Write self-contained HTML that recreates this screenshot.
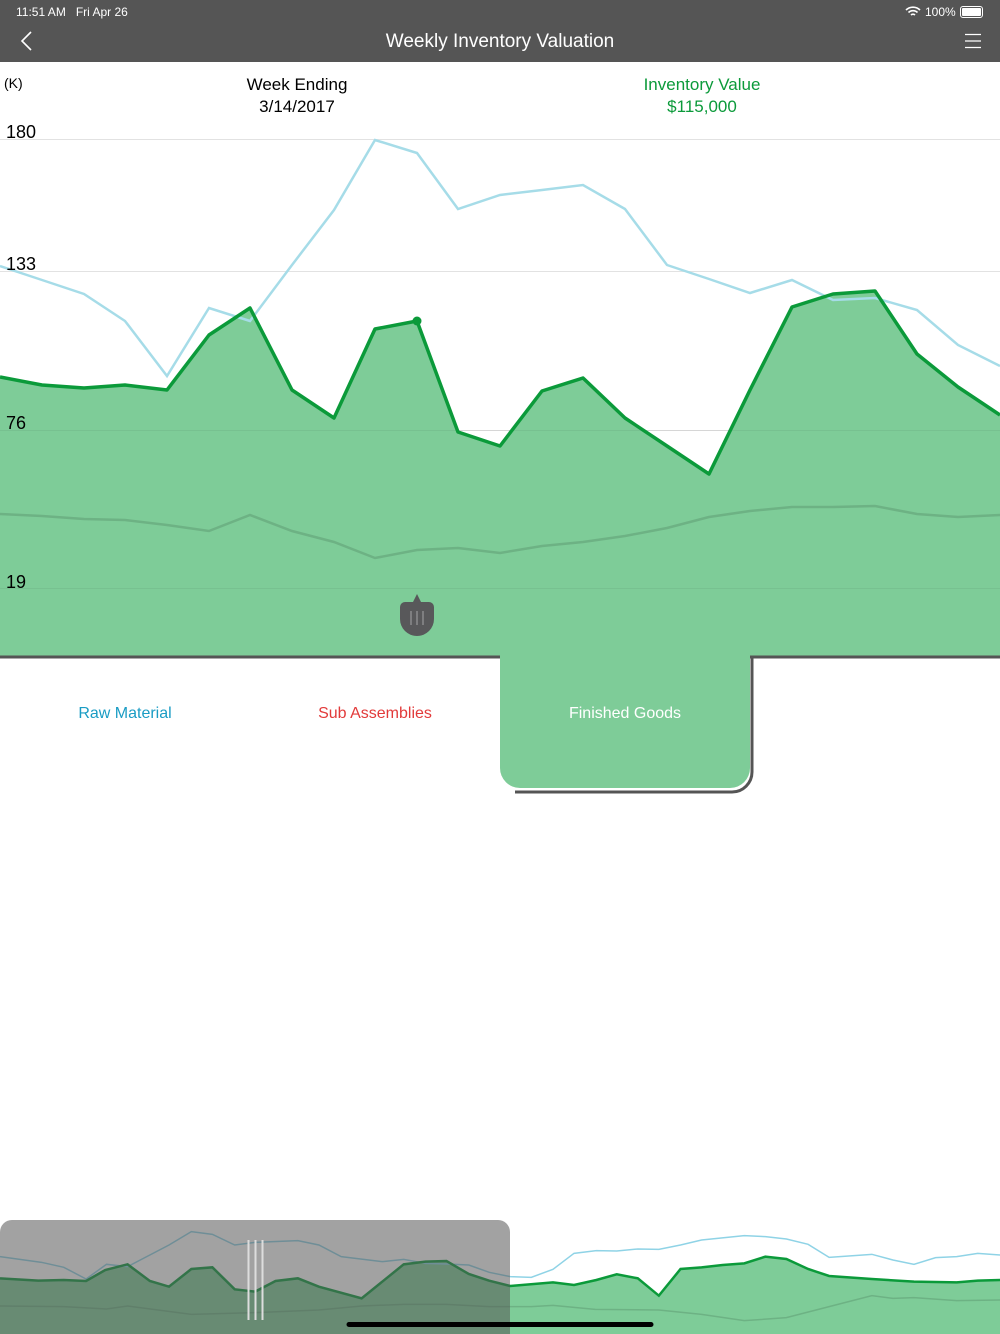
<!DOCTYPE html>
<html><head><style>
body{margin:0;width:1000px;height:1334px;position:relative;overflow:hidden;background:#fff;font-family:"Liberation Sans",sans-serif}
.a{position:absolute;white-space:nowrap}
</style></head><body>
<div class="a" style="left:0;top:0;width:1000px;height:62px;background:#555"></div>
<div class="a" style="left:16px;top:5px;font-size:12px;color:#fff">11:51 AM&nbsp;&nbsp;&nbsp;Fri Apr 26</div>
<div class="a" style="left:925px;top:5px;font-size:12px;color:#fff">100%</div>
<svg class="a" style="left:905px;top:5px" width="16" height="13" viewBox="0 0 16 13"><path d="M1 5a10 10 0 0 1 14 0M3.5 7.5a6.5 6.5 0 0 1 9 0M6 10a3 3 0 0 1 4 0" stroke="#fff" stroke-width="1.6" fill="none"/></svg>
<div class="a" style="left:960px;top:6px;width:21px;height:10px;border:1px solid #fff;border-radius:3px"><div style="margin:1px;height:8px;background:#fff;border-radius:1px"></div></div>
<svg class="a" style="left:18px;top:30px" width="16" height="22"><path d="M13 2L4 11l9 9" stroke="#fff" stroke-width="1.6" fill="none"/></svg>
<div class="a" style="left:0;width:1000px;top:31px;text-align:center;font-size:19px;color:#fff">Weekly Inventory Valuation</div>
<svg class="a" style="left:964px;top:33px" width="18" height="16"><path d="M1 1.5h16M1 8h16M1 14.5h16" stroke="#fff" stroke-width="1.3"/></svg>

<svg class="a" style="left:0;top:0" width="1000" height="1334">
<g stroke="#e2e2e2" stroke-width="1"><path d="M0 139.5H1000M0 271.5H1000M0 430.5H1000M0 588.5H1000"/></g>
<path d="M0 377L42 385L84 388L125 385L167 390L209 335L250 308L292 390L334 418L375 329L417 321L458 432L500 446L542 391L583 378L625 418L667 446L709 474L750 390L792 307L833 294L875 291L917 354L958 387L1000 415L1000 656L0 656Z" fill="#7ecc98"/>
<polyline points="0,266 42,280 84,294 125,321 167,376 209,308 250,321 292,265 334,210 375,140 417,153 458,209 500,195 542,190 583,185 625,209 667,265 709,279 750,293 792,280 833,300 875,298 917,310 958,345 1000,366" fill="none" stroke="#a6dce8" stroke-width="2.5"/>
<g stroke="#000" stroke-opacity="0.05" stroke-width="1"><path d="M0 430.5H1000M0 588.5H1000"/></g>
<polyline points="0,514 42,516 84,519 125,520 167,525 209,531 250,515 292,531 334,542 375,558 417,550 458,548 500,553 542,546 583,542 625,536 667,528 709,517 750,511 792,507 833,507 875,506 917,514 958,517 1000,515" fill="none" stroke="#6db284" stroke-width="2.5"/>
<polyline points="0,377 42,385 84,388 125,385 167,390 209,335 250,308 292,390 334,418 375,329 417,321 458,432 500,446 542,391 583,378 625,418 667,446 709,474 750,390 792,307 833,294 875,291 917,354 958,387 1000,415" fill="none" stroke="#0b9a3a" stroke-width="3.5" stroke-linejoin="round"/>
<circle cx="417" cy="321" r="4.5" fill="#0b9a3a"/>
<path d="M0 657H502M750 657H1000" stroke="#555" stroke-width="3"/>
<path d="M752 656V772a20 20 0 0 1 -20 20H515" fill="none" stroke="#555" stroke-width="3"/>
<path d="M500 655H750V768a20 20 0 0 1 -20 20H520a20 20 0 0 1 -20 -20Z" fill="#7ecc98"/>
<path d="M417 594L421 602H429a5 5 0 0 1 5 5V619a17 17 0 0 1 -34 0V607a5 5 0 0 1 5 -5H413Z" fill="#58585a"/>
<path d="M411 611V625M417 611V625M423 611V625" stroke="#8a8a8c" stroke-width="1.5"/>

<g transform="translate(0,1210) scale(0.6378,0.3333)">
<path d="M0 205L60 212L100 210L135 213L165 180L200 163L235 213L265 230L300 177L333 172L368 238L400 245L432 213L467 205L500 230L567 265L633 163L667 155L700 153L735 192L767 212L800 228L867 217L900 225L935 210L967 193L1000 205L1033 257L1067 177L1100 172L1133 165L1167 160L1200 140L1233 147L1267 177L1300 198L1367 207L1433 215L1500 217L1533 212L1568 210L1568 372L0 372Z" fill="#7ecc98"/>
<polyline points="0,140 65,157 100,172 135,207 167,163 200,170 265,105 300,65 333,73 368,105 400,97 467,92 500,105 535,140 600,155 633,148 667,160 700,162 735,165 767,187 800,200 833,202 867,178 900,130 935,122 967,123 1000,117 1033,118 1067,105 1100,90 1167,77 1200,80 1233,87 1267,103 1300,142 1367,133 1400,150 1433,163 1467,143 1500,140 1533,130 1568,135" fill="none" stroke="#8fd3e6" stroke-width="1.5" vector-effect="non-scaling-stroke"/>
<polyline points="0,288 100,290 167,297 200,288 300,313 400,308 500,300 567,288 633,283 700,283 767,290 833,290 867,286 933,298 1033,300 1100,313 1167,332 1233,323 1300,290 1367,257 1400,265 1433,263 1500,272 1568,270" fill="none" stroke="#6db284" stroke-width="1.5" vector-effect="non-scaling-stroke"/>
<polyline points="0,205 60,212 100,210 135,213 165,180 200,163 235,213 265,230 300,177 333,172 368,238 400,245 432,213 467,205 500,230 567,265 633,163 667,155 700,153 735,192 767,212 800,228 867,217 900,225 935,210 967,193 1000,205 1033,257 1067,177 1100,172 1133,165 1167,160 1200,140 1233,147 1267,177 1300,198 1367,207 1433,215 1500,217 1533,212 1568,210" fill="none" stroke="#0b9a3a" stroke-width="2.5" vector-effect="non-scaling-stroke"/>
</g>
<path d="M0 1334V1232a12 12 0 0 1 12 -12H498a12 12 0 0 1 12 12V1334Z" fill="#555" fill-opacity="0.55"/>
<path d="M248.5 1240V1320M255.5 1240V1320M262.5 1240V1320" stroke="#ddd" stroke-width="2"/>
<path d="M349 1324.5H651" stroke="#000" stroke-width="5" stroke-linecap="round"/>
</svg>

<div class="a" style="left:4px;top:75px;font-size:14px">(K)</div>
<div class="a" style="left:197px;width:200px;top:74px;text-align:center;font-size:17px;line-height:22px">Week Ending<br>3/14/2017</div>
<div class="a" style="left:602px;width:200px;top:74px;text-align:center;font-size:17px;line-height:22px;color:#0b9a3a">Inventory Value<br>$115,000</div>
<div class="a" style="left:6px;top:122px;font-size:18px">180</div>
<div class="a" style="left:6px;top:254px;font-size:18px">133</div>
<div class="a" style="left:6px;top:413px;font-size:18px">76</div>
<div class="a" style="left:6px;top:572px;font-size:18px">19</div>
<div class="a" style="left:0;width:250px;top:705px;text-align:center;font-size:16px;color:#1a9cc4">Raw Material</div>
<div class="a" style="left:250px;width:250px;top:705px;text-align:center;font-size:16px;color:#e23a3a">Sub Assemblies</div>
<div class="a" style="left:500px;width:250px;top:705px;text-align:center;font-size:16px;color:#fff">Finished Goods</div>
</body></html>
